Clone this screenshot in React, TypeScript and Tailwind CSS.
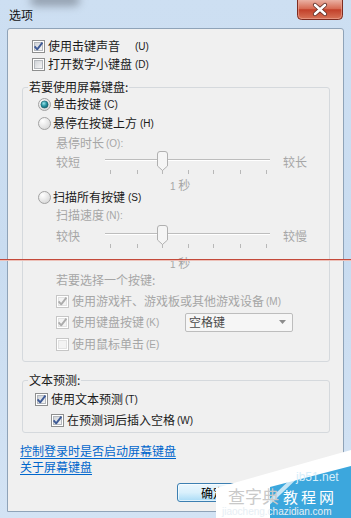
import React from 'react';

function Check({ checked, disabled }: { checked: boolean; disabled?: boolean }) {
  return (
    <svg width="13" height="13" viewBox="0 0 13 13" className="shrink-0">
      <rect x="0.5" y="0.5" width="12" height="12" fill="#ffffff" stroke={disabled ? '#c6c6c6' : '#8e8f8f'} />
      <rect x="2.5" y="2.5" width="8" height="8" fill={disabled ? '#f3f3f3' : 'url(#cbIn)'} stroke={disabled ? '#e2e2e2' : '#b4b8bd'} />
      {checked && (
        <path d="M2.6 6.4 L5.2 9.3 L10.4 2.6" stroke={disabled ? '#acacac' : '#3e5a96'} strokeWidth="1.9" fill="none" strokeLinejoin="round" />
      )}
    </svg>
  );
}

function Radio({ selected }: { selected?: boolean }) {
  return (
    <svg width="13" height="13" viewBox="0 0 13 13" className="shrink-0">
      <circle cx="6.5" cy="6.5" r="6" fill="url(#rdBg)" stroke="#a2a2a2" />
      {selected && <circle cx="6.5" cy="6.5" r="3.6" fill="url(#rdDot)" stroke="#1a5d68" strokeWidth="0.6" />}
    </svg>
  );
}

function Slider() {
  const ticks = [7, 34, 59, 85, 110, 137, 163];
  return (
    <svg width="170" height="26" viewBox="0 0 170 26" className="shrink-0 overflow-visible">
      <line x1="2" y1="6.5" x2="167" y2="6.5" stroke="#bdbdbd" />
      <line x1="2" y1="7.5" x2="167" y2="7.5" stroke="#ffffff" />
      {ticks.map((x) => (
        <line key={x} x1={x + 0.5} y1="17" x2={x + 0.5} y2="21" stroke="#b8b8b8" />
      ))}
      <path d="M54.5 1 Q54.5 -1.5 57 -1.5 H62 Q64.5 -1.5 64.5 1 V13 L59.5 17.5 L54.5 13 Z" fill="#f5f5f5" stroke="#b0b0b0" />
    </svg>
  );
}

const MN = "font-['Liberation_Sans',sans-serif] text-[10px]";

export default function App() {
  return (
    <div className="relative w-[351px] h-[518px] overflow-hidden bg-gradient-to-b from-[#cddff2] via-[#c9dcf0] to-[#d3e3f4] font-['Noto_Sans_CJK_SC','Noto_Sans',sans-serif] text-[12px] text-[#1a1a1a]">
      <svg width="0" height="0" className="absolute">
        <defs>
          <linearGradient id="cbIn" x1="0" y1="0" x2="1" y2="1">
            <stop offset="0" stopColor="#cdd1d6" />
            <stop offset="1" stopColor="#f8f8f8" />
          </linearGradient>
          <radialGradient id="rdBg" cx="0.35" cy="0.3" r="0.85">
            <stop offset="0" stopColor="#ffffff" />
            <stop offset="1" stopColor="#d2d2d2" />
          </radialGradient>
          <radialGradient id="rdDot" cx="0.4" cy="0.35" r="0.7">
            <stop offset="0" stopColor="#9be4ea" />
            <stop offset="0.55" stopColor="#24919f" />
            <stop offset="1" stopColor="#135f6b" />
          </radialGradient>
          <linearGradient id="closeG" x1="0" y1="0" x2="0" y2="1">
            <stop offset="0" stopColor="#eab1a3" />
            <stop offset="0.45" stopColor="#d66a52" />
            <stop offset="0.5" stopColor="#c2402a" />
            <stop offset="1" stopColor="#d8765a" />
          </linearGradient>
        </defs>
      </svg>

      {/* blurred background through glass */}
      <div className="absolute left-[30px] top-[-6px] w-[50px] h-[12px] rounded-full bg-[#6b7480] opacity-60 blur-[4px]" />

      {/* title bar */}
      <div className="relative flex h-[28px] items-start justify-between">
        <div className="pl-[9px] pt-[7px] leading-[16px] text-[12px] text-[#111]">选项</div>
        <svg width="46" height="20" viewBox="0 0 46 20" className="mr-[8px]">
          <path d="M0.5 0 V15.5 Q0.5 19.5 4.5 19.5 H41.5 Q45.5 19.5 45.5 15.5 V0" fill="url(#closeG)" stroke="#7d2c20" />
          <path d="M1.5 0 V15 Q1.5 18.5 5 18.5 H41 Q44.5 18.5 44.5 15 V0" fill="none" stroke="#efa898" strokeOpacity="0.6" />
          <path d="M18 5 L28 14 M28 5 L18 14" stroke="#5a2a22" strokeWidth="4.2" strokeLinecap="round" />
          <path d="M18 5 L28 14 M28 5 L18 14" stroke="#ffffff" strokeWidth="2.6" strokeLinecap="round" />
        </svg>
      </div>

      {/* client area */}
      <div className="relative mx-[7px] h-[484px] rounded-t-[3px] border border-[#8fa3b8] bg-[#f0f0f0] flex flex-col">
        <div className="pt-[8px] pl-[24px]">
          <div className="flex h-[18px] items-center">
            <Check checked />
            <span className="ml-[3px]">使用击键声音</span>
            <span className={`${MN} ml-[15px]`}>(U)</span>
          </div>
          <div className="flex h-[18px] items-center">
            <Check checked={false} />
            <span className="ml-[3px]">打开数字小键盘</span>
            <span className={`${MN} ml-[3px]`}>(D)</span>
          </div>
        </div>

        <fieldset className="mt-[6px] ml-[14px] mr-[13px] rounded-[3px] border border-[#d5d9dd] p-0">
          <legend className="ml-[5px] px-[1px] leading-[16px]">若要使用屏幕键盘:</legend>
          <div className="pl-[15px] pb-[4px]">
            <div className="flex h-[18px] items-center">
              <Radio selected />
              <span className="ml-[2px]">单击按键</span>
              <span className={`${MN} ml-[3px]`}>(C)</span>
            </div>
            <div className="flex h-[20px] items-center">
              <Radio />
              <span className="ml-[2px]">悬停在按键上方</span>
              <span className={`${MN} ml-[3px]`}>(H)</span>
            </div>
            <div className="ml-[18px] flex h-[20px] items-center text-[#a6a6a6]">
              <span>悬停时长</span>
              <span className={`${MN} ml-[2px]`}>(O):</span>
            </div>
            <div className="ml-[18px] flex h-[26px] items-start text-[#a6a6a6]">
              <span className="w-[47px] leading-[18px]">较短</span>
              <Slider />
              <span className="ml-[10px] leading-[18px]">较长</span>
            </div>
            <div className="h-[12px] pl-[132px] leading-[12px] text-[#a6a6a6]">
              <span className={MN}>1</span> 秒
            </div>
            <div className="flex h-[12px] items-center">
              <Radio />
              <span className="ml-[2px]">扫描所有按键</span>
              <span className={`${MN} ml-[3px]`}>(S)</span>
            </div>
            <div className="ml-[18px] flex h-[24px] items-center text-[#a6a6a6]">
              <span>扫描速度</span>
              <span className={`${MN} ml-[2px]`}>(N):</span>
            </div>
            <div className="ml-[18px] flex h-[26px] items-start text-[#a6a6a6]">
              <span className="w-[47px] leading-[18px]">较快</span>
              <Slider />
              <span className="ml-[10px] leading-[18px]">较慢</span>
            </div>
            <div className="mt-[2px] h-[16px] pl-[132px] leading-[16px] text-[#a6a6a6]">
              <span className={MN}>1</span> 秒
            </div>
            <div className="ml-[18px] flex h-[18px] items-center text-[#a6a6a6]">若要选择一个按键:</div>
            <div className="ml-[18px] flex h-[24px] items-center text-[#a6a6a6]">
              <Check checked disabled />
              <span className="ml-[3px]">使用游戏杆、游戏板或其他游戏设备</span>
              <span className={`${MN} ml-[2px]`}>(M)</span>
            </div>
            <div className="ml-[18px] flex h-[18px] items-center text-[#a6a6a6]">
              <div className="flex w-[129px] items-center">
                <Check checked disabled />
                <span className="ml-[3px]">使用键盘按键</span>
                <span className={`${MN} ml-[2px]`}>(K)</span>
              </div>
              <div className="flex h-[19px] w-[108px] items-center justify-between rounded-[2px] border border-[#bdbdbd] bg-[#f6f6f6] pl-[3px] pr-[6px] text-[#4a4a4a]">
                <span>空格键</span>
                <svg width="7" height="4" viewBox="0 0 7 4">
                  <path d="M0 0 H7 L3.5 4 Z" fill="#8c8c8c" />
                </svg>
              </div>
            </div>
            <div className="ml-[18px] flex h-[26px] items-center text-[#a6a6a6]">
              <Check checked={false} disabled />
              <span className="ml-[3px]">使用鼠标单击</span>
              <span className={`${MN} ml-[2px]`}>(E)</span>
            </div>
          </div>
        </fieldset>

        <fieldset className="mt-[10px] ml-[14px] mr-[13px] rounded-[3px] border border-[#d5d9dd] p-0">
          <legend className="ml-[5px] px-[1px] leading-[16px]">文本预测:</legend>
          <div className="pl-[12px] pb-[2px]">
            <div className="flex h-[22px] items-center">
              <Check checked />
              <span className="ml-[3px]">使用文本预测</span>
              <span className={`${MN} ml-[2px]`}>(T)</span>
            </div>
            <div className="ml-[16px] flex h-[20px] items-center">
              <Check checked />
              <span className="ml-[3px]">在预测词后插入空格</span>
              <span className={`${MN} ml-[2px]`}>(W)</span>
            </div>
          </div>
        </fieldset>

        <div className="mt-[10px] pl-[12px] flex flex-col items-start">
          <span className="h-[16px] leading-[16px] text-[#0066cc] underline underline-offset-[2px]">控制登录时是否启动屏幕键盘</span>
          <span className="h-[16px] leading-[16px] text-[#0066cc] underline underline-offset-[2px]">关于屏幕键盘</span>
        </div>

        <div className="mt-[8px] pl-[169px]">
          <div className="flex h-[19px] w-[75px] items-center justify-start pl-[23px] rounded-[3px] border border-[#3c7fb1] bg-gradient-to-b from-[#eaf6fd] via-[#d9f0fc] to-[#a9dbf6] text-[12px] text-black shadow-[inset_0_0_0_1px_#ffffffa0]">
            确定
          </div>
        </div>
      </div>

      {/* red annotation line */}
      <div className="absolute left-0 top-[259px] h-[1px] w-full bg-[#c4493a]" />
      <div className="absolute left-0 top-[260px] h-[1px] w-full bg-[#ecc0b8]" />

      {/* watermark */}
      <svg width="351" height="518" viewBox="0 0 351 518" className="absolute left-0 top-0 pointer-events-none">
        <polygon points="216,518 216,488 351,450 351,518" fill="#ffffff" />
        <polygon points="270,518 270,487 351,466 351,518" fill="#3ca7dd" />
        <polygon points="250,518 300,470 306,470 256,518" fill="#ffffff" opacity="0.7" />
      </svg>
      <div className="absolute left-[228px] top-[487px] text-[17px] leading-[18px] text-[#c9c9c9]">查字典</div>
      <div className="absolute left-[296px] top-[471px] font-['Liberation_Sans',sans-serif] text-[12px] leading-[13px] text-[#d6eefa]">jb51.net</div>
      <div className="absolute left-[283px] top-[488px] text-[15px] leading-[17px] tracking-[3px] text-white">教程网</div>
      <div className="absolute left-[222px] top-[507px] font-['Liberation_Sans',sans-serif] text-[10px] leading-[10px] text-[#e6eef4]">jiaocheng.chazidian.com</div>
    </div>
  );
}
